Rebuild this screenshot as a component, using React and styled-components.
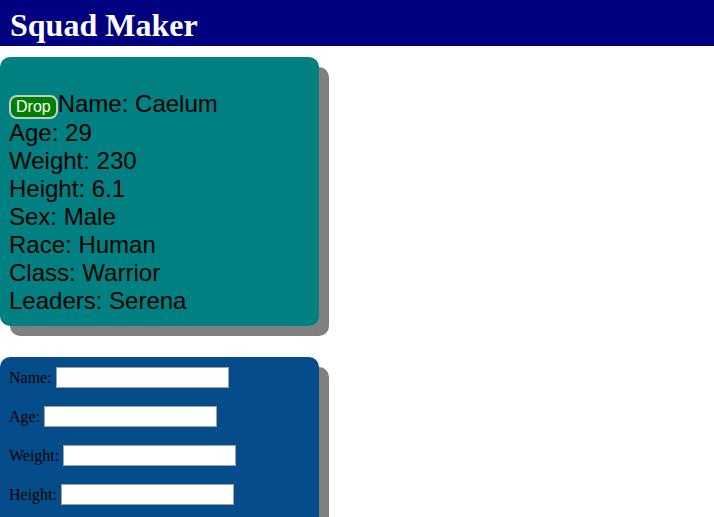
import React from "react";
import styled, { createGlobalStyle } from "styled-components";

const GlobalStyle = createGlobalStyle`
  body {
    margin: 0;
    background: #ffffff;
    font-family: "Liberation Serif", "Times New Roman", serif;
  }
`;

const Header = styled.header`
  box-sizing: border-box;
  background-color: #000080;
  height: 46px;
  display: flex;
  align-items: center;
  padding: 4px 0 0 10px;
`;

const Title = styled.h1`
  margin: 0;
  color: #ffffff;
  font-family: "Liberation Serif", "Times New Roman", serif;
  font-size: 32px;
  font-weight: 700;
`;

const Main = styled.main`
  display: flex;
  flex-direction: column;
  align-items: flex-start;
  gap: 31px;
  padding-top: 11px;
`;

const Card = styled.section`
  box-sizing: border-box;
  width: 319px;
  background-color: ${props => props.$bg};
  border-radius: 10px;
  box-shadow: 10px 10px 0 #808080;
`;

const MemberCard = styled(Card)`
  padding: 33px 9px 11px;
  font-family: "Liberation Sans", Arial, sans-serif;
  font-size: 24px;
  color: #000000;
`;

const Line = styled.div`
  line-height: 28px;
`;

const DropButton = styled.button`
  background-color: #008000;
  color: #ffffff;
  font-family: "Liberation Sans", Arial, sans-serif;
  font-size: 16px;
  border: 2px solid #c8c8c8;
  border-radius: 8px;
  padding: 1px 5px;
  height: 24px;
`;

const FormCard = styled(Card)`
  padding: 9px 9px;
  display: flex;
  flex-direction: column;
  gap: 16px;
  min-height: 170px;
`;

const Row = styled.label`
  display: flex;
  align-items: center;
  gap: 4px;
  font-family: "Liberation Serif", "Times New Roman", serif;
  font-size: 16px;
  color: #000000;
  height: 23px;
`;

const Field = styled.input`
  box-sizing: border-box;
  width: 173px;
  height: 21px;
  border: 1px solid #a0a0a0;
  background: #ffffff;
  padding: 1px 2px;
`;

const member = [
  ["Age", "29"],
  ["Weight", "230"],
  ["Height", "6.1"],
  ["Sex", "Male"],
  ["Race", "Human"],
  ["Class", "Warrior"],
  ["Leaders", "Serena"],
];

const fields = ["Name", "Age", "Weight", "Height"];

export default function App() {
  return (
    <>
      <GlobalStyle />
      <Header>
        <Title>Squad Maker</Title>
      </Header>
      <Main>
        <MemberCard $bg="#008080">
          <Line>
            <DropButton>Drop</DropButton>Name: Caelum
          </Line>
          {member.map(([k, v]) => (
            <Line key={k}>{k}: {v}</Line>
          ))}
        </MemberCard>
        <FormCard $bg="#044d8a">
          {fields.map(f => (
            <Row key={f}>
              {f}: <Field type="text" />
            </Row>
          ))}
        </FormCard>
      </Main>
    </>
  );
}
